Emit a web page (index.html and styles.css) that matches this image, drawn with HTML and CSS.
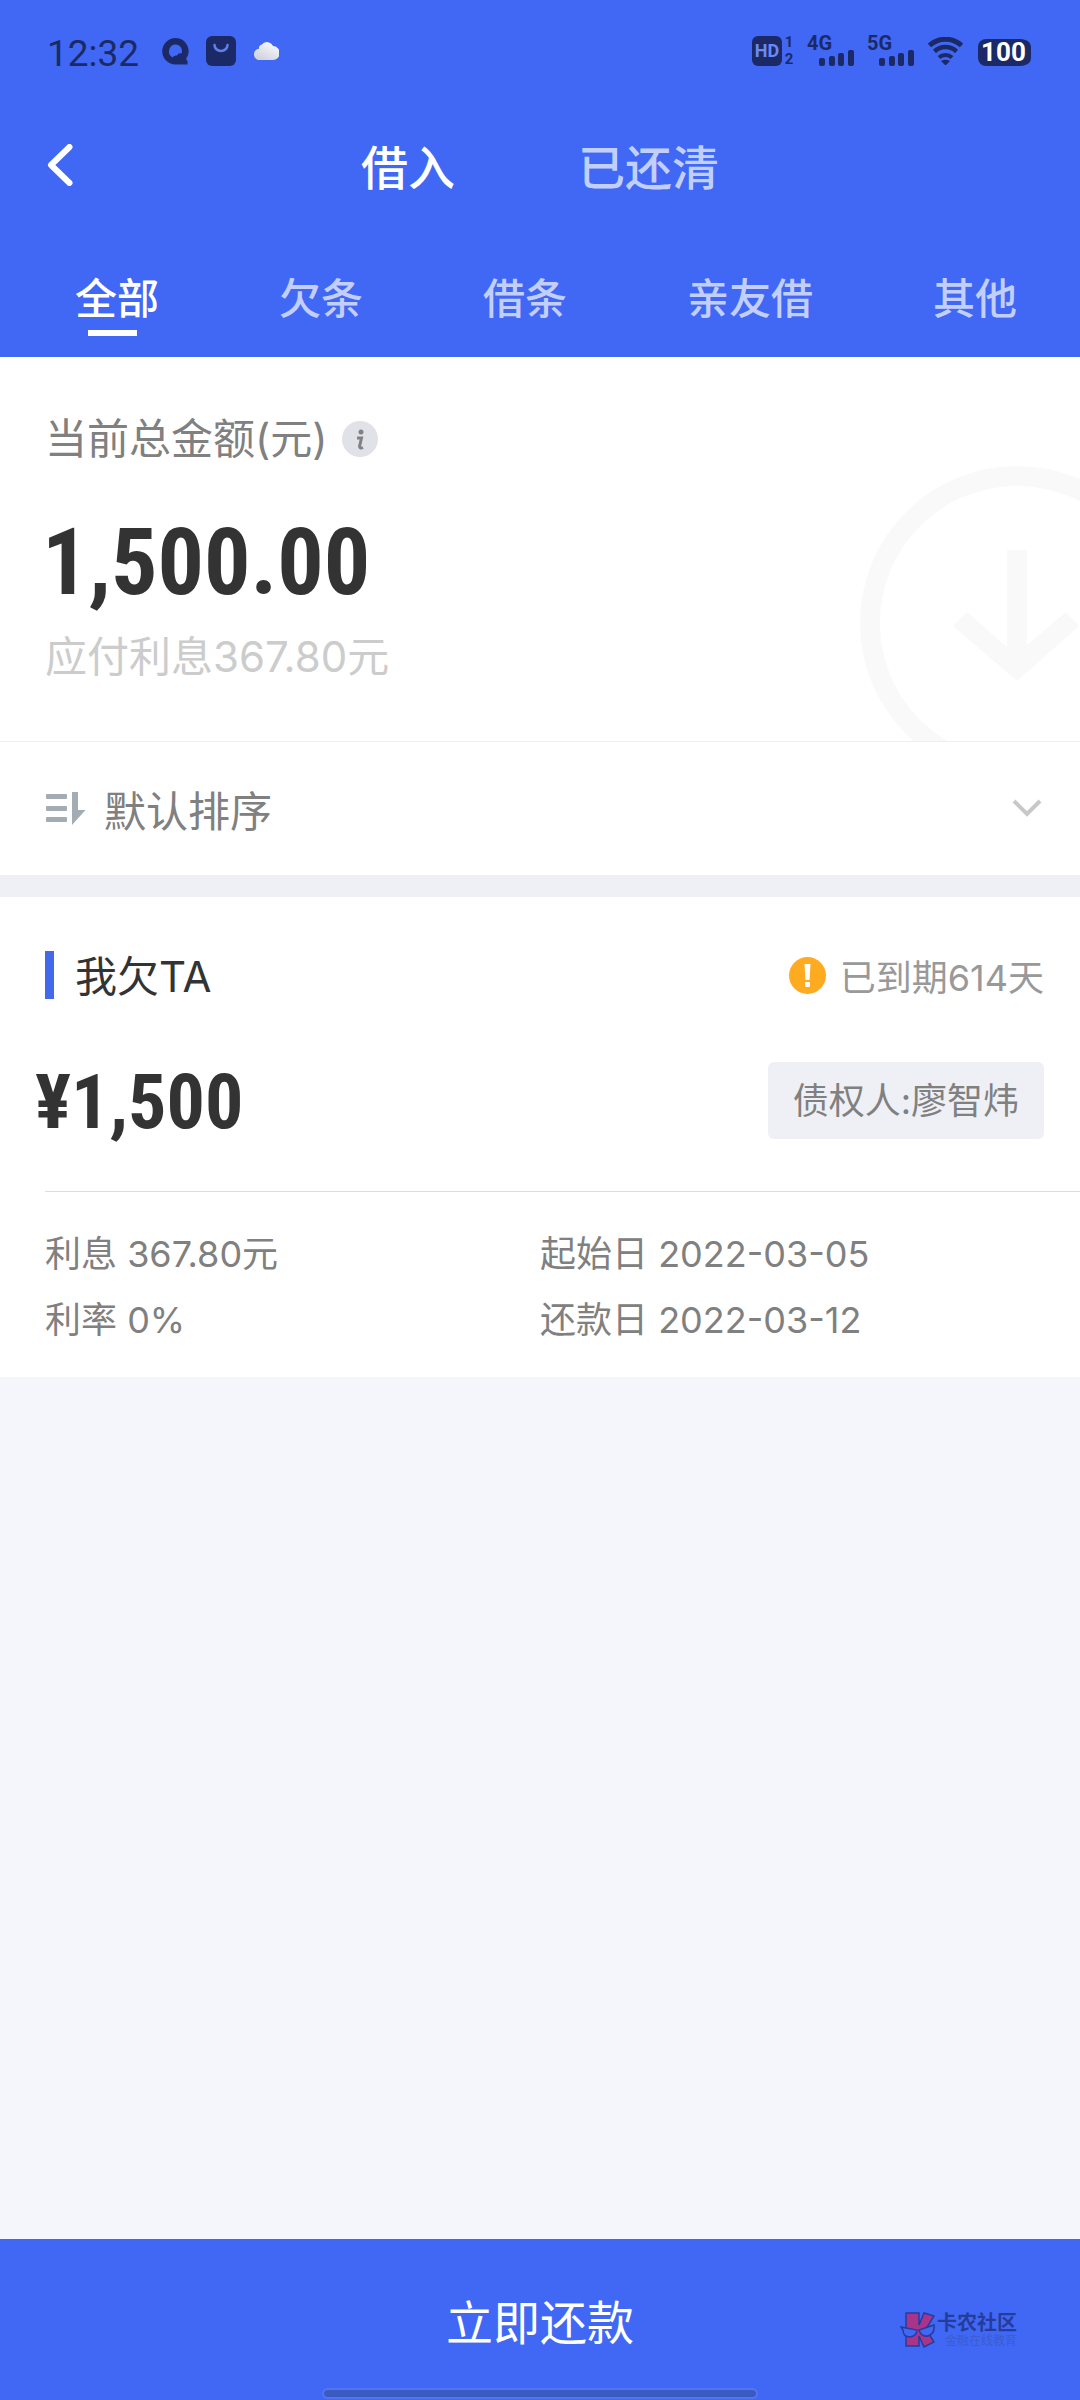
FILE: index.html
```html
<!DOCTYPE html>
<html lang="zh-CN">
<head>
<meta charset="utf-8">
<meta name="viewport" content="width=device-width, initial-scale=1">
<title>借入</title>
<link rel="stylesheet" href="styles.css">
</head>
<body>
<div class="page">
  <header class="header">
    <div class="status">
      <div class="status-left">
        <span class="clock">12:32</span>
        <svg class="ic-q" viewBox="0 0 27 27" width="27" height="27"><path fill="#1b2a66" fill-rule="evenodd" d="M13.500 0A13.200 13.200 0 0 0 13.500 26.500H25.500V23L24 21A13.200 13.200 0 0 0 13.500 0ZM13 6.500A6.500 6.500 0 0 1 19.500 15.500Q16.500 14.500 15 17.500Q12 17 10.500 19.500A7 7 0 0 1 13 6.500Z"/></svg>
        <svg class="ic-bag" viewBox="0 0 30 30" width="30" height="30"><rect width="30" height="30" rx="6" fill="#1b2a66"/><path d="M8.500 9a6.500 6 0 0 0 13 0" fill="none" stroke="#5f80f0" stroke-width="2.500" stroke-linecap="round"/></svg>
        <svg class="ic-cloud" viewBox="0 0 25 19" width="25" height="19"><defs><linearGradient id="cl" x1="1" y1="0" x2="0.300" y2="1"><stop offset="0" stop-color="#fff"/><stop offset="1" stop-color="#cfd3df"/></linearGradient></defs><path fill="url(#cl)" d="M6 19a5.500 5.500 0 0 1-1-11.200A4 4 0 0 1 8 3.500 6.500 6.500 0 0 1 19 5A6.300 6.300 0 0 1 18.500 19Z"/></svg>
      </div>
      <div class="status-right">
        <div class="hd">
          <span class="hd-box">HD</span>
          <span class="sims"><span>1</span><span>2</span></span>
        </div>
        <div class="signal">
          <span class="net">4G</span>
          <svg viewBox="0 0 35 16" width="35" height="16" fill="#1b2a66"><rect y="8" width="6" height="8" rx="2"/><rect x="10" y="6" width="6" height="10" rx="2"/><rect x="19" y="3" width="6" height="13" rx="2"/><rect x="29" width="6" height="16" rx="2"/></svg>
        </div>
        <div class="signal">
          <span class="net">5G</span>
          <svg viewBox="0 0 35 16" width="35" height="16" fill="#1b2a66"><rect y="8" width="6" height="8" rx="2"/><rect x="10" y="6" width="6" height="10" rx="2"/><rect x="19" y="3" width="6" height="13" rx="2"/><rect x="29" width="6" height="16" rx="2"/></svg>
        </div>
        <svg class="wifi" viewBox="0 0 35 28" width="35" height="28" fill="none" stroke="#1b2a66" stroke-width="5"><path d="M1.500 8.500a23.500 23.500 0 0 1 32 0"/><path d="M6.500 14.500a16 16 0 0 1 22 0" stroke-width="4.500"/><path d="M11 20.500a9.500 9.500 0 0 1 13 0" stroke-width="4"/><path d="M13 24L17.500 28.500L22 24Q17.500 21.500 13 24Z" fill="#1b2a66" stroke="none"/></svg>
        <span class="battery">100</span>
      </div>
    </div>
    <div class="nav">
      <button class="back" aria-label="返回"><svg viewBox="0 0 26 42" width="26" height="42"><path d="M22.500 3L4 21L22.500 39" fill="none" stroke="#fff" stroke-width="6" stroke-linecap="round" stroke-linejoin="round"/></svg></button>
      <div class="switch">
        <button class="switch-item active">借入</button>
        <button class="switch-item">已还清</button>
      </div>
    </div>
    <nav class="tabs">
      <button class="tab active">全部</button>
      <button class="tab">欠条</button>
      <button class="tab">借条</button>
      <button class="tab">亲友借</button>
      <button class="tab">其他</button>
    </nav>
  </header>

  <section class="summary">
    <svg class="deco" viewBox="0 0 220 275" width="220" height="275"><circle cx="157" cy="157" r="147" fill="none" stroke="#f9f9f9" stroke-width="20"/><path fill="#f9f9f9" d="M147 84H167V179L206 146L219 160L157 215L93 160L107 146L147 181Z"/></svg>
    <div class="summary-label">
      <span>当前总金额(元)</span>
      <button class="info" aria-label="说明"><svg viewBox="0 0 36 36" width="36" height="36"><circle cx="18" cy="18" r="18" fill="#e1e2e8"/><circle cx="19" cy="11" r="2.500" fill="#808086"/><path d="M15 17H19.500L17.500 25.500Q18 28 21 26.500" fill="none" stroke="#808086" stroke-width="3"/></svg></button>
    </div>
    <div class="total">1,500.00</div>
    <div class="interest">应付利息367.80元</div>
  </section>

  <button class="sort">
    <svg viewBox="0 0 40 34" width="40" height="34" fill="#a3acb3"><rect y="2" width="21" height="5" rx="1"/><rect y="14" width="21" height="5" rx="1"/><rect y="25" width="21" height="5" rx="1"/><path d="M26 0H32V18H39.500L26 33Z"/></svg>
    <span class="sort-text">默认排序</span>
    <svg viewBox="0 0 30 19" width="30" height="19"><path d="M2 2L15 15L28 2" fill="none" stroke="#c8c8c8" stroke-width="4"/></svg>
  </button>

  <main class="list">
    <article class="card">
      <div class="card-head">
        <h2 class="card-title">我欠TA</h2>
        <span class="due">
          <svg viewBox="0 0 37 37" width="37" height="37"><circle cx="18.500" cy="18.500" r="18.500" fill="#ffab1f"/><path d="M15.500 7H21.500L20.500 23H16.500Z" fill="#fff"/><rect x="16" y="25" width="5" height="5" rx="1" fill="#fff"/></svg>
          已到期614天
        </span>
      </div>
      <div class="card-main">
        <span class="amount">¥1,500</span>
        <span class="creditor">债权人:廖智炜</span>
      </div>
      <div class="details">
        <span>利息 367.80元</span><span>起始日 2022-03-05</span>
        <span>利率 0%</span><span>还款日 2022-03-12</span>
      </div>
    </article>
  </main>

  <footer class="footer">
    <button class="repay">立即还款</button>
    <div class="home-bar"></div>
    <div class="mark">
      <svg viewBox="0 0 35 36" width="35" height="36" stroke="#263c9c" stroke-width="1.500"><path fill="#a8358a" d="M6 1H19V13L24 1L34 4L26 17L34 30L24 35L19 24V34H6Z"/><path fill="#4068f4" d="M1 15L17 18Q17 24 10 25Q3 25 3 18Z"/><path fill="#4068f4" d="M19 18L34 13Q35 22 28 24Q21 25 19 18Z"/></svg>
      <div class="mark-text"><span class="mark-name">卡农社区</span><span class="mark-sub">金融在线教育</span></div>
    </div>
  </footer>
</div>
</body>
</html>
```
FILE: styles.css
```css
* { box-sizing: border-box; }

body {
  margin: 0;
  font-family: Inter, "Noto Sans CJK SC", sans-serif;
  color: #333;
  background: #f4f6fb;
}

button {
  padding: 0;
  border: 0;
  background: none;
  font: inherit;
  color: inherit;
  cursor: pointer;
}

svg { display: block; flex: none; }

.page {
  display: flex;
  flex-direction: column;
  min-height: 100vh;
}

/* header */
.header { background: #4068f4; color: #fff; }

.status {
  display: flex;
  justify-content: space-between;
  height: 100px;
  padding: 36px 48px 0 47px;
  color: #1b2a66;
}

.status-left, .status-right { display: flex; height: 30px; align-items: center; }

.clock { font: 37px/30px Roboto, sans-serif; margin: 6px 23px 0 0; }
.ic-bag { margin: 0 18px 0 17px; }
.ic-cloud { margin-bottom: 2px; }
.status-right { gap: 13px; }
.hd { display: flex; gap: 2px; }

.hd-box {
  width: 30px;
  border-radius: 6px;
  background: #1b2a66;
  color: #6b8af5;
  font: bold 18px/30px Roboto, sans-serif;
  text-align: center;
}

.sims {
  display: flex;
  flex-direction: column;
  justify-content: space-between;
  width: 10px;
  font: bold 15px/13px Roboto, sans-serif;
  text-align: center;
}

.signal { display: flex; flex-direction: column; align-items: flex-end; height: 30px; width: 47px; }
.net { align-self: flex-start; font: bold 20px/14px Roboto, sans-serif; }
.wifi { margin: 0 2px 0 1px; }

.battery {
  width: 51px;
  margin: 3px 3px 0 0;
  border-radius: 8px;
  background: #1b2a66;
  box-shadow: 3px 0 0 -1px #1b2a66;
  color: #fff;
  font: bold 26px/27px Roboto, sans-serif;
  text-align: center;
}

.nav {
  display: grid;
  grid-template-columns: 1fr auto 1fr;
  align-items: center;
  height: 135px;
  padding: 0 47px;
}

.back { justify-self: start; margin-bottom: 6px; }
.switch { display: flex; gap: 123px; }
.switch-item { font-size: 47px; line-height: 64px; font-weight: 500; color: #c2cffc; }
.tabs { display: flex; justify-content: space-between; height: 122px; padding: 34px 63px 0 75px; }
.tab { position: relative; align-self: flex-start; font-size: 42px; line-height: 60px; font-weight: 500; color: #c2cffc; }
.switch-item.active, .tab.active { color: #fff; }

.tab.active::after {
  content: "";
  position: absolute;
  left: 13px;
  bottom: -7px;
  width: 49px;
  height: 6px;
  background: #fff;
}

/* summary */
.summary {
  position: relative;
  overflow: hidden;
  height: 385px;
  padding: 52px 45px 0;
  border-bottom: 1px solid #eee;
  background: #fff;
}

.deco { position: absolute; right: 0; bottom: 0; }
.summary-label { display: flex; align-items: center; gap: 14px; font-size: 42px; line-height: 60px; color: #808080; }
.total { margin: 34px 0 2px -3px; font: bold 92px/120px "Roboto Condensed", Roboto, sans-serif; }
.interest { padding-top: 2px; font-size: 42px; line-height: 60px; color: #ccc; }

/* sort row */
.sort {
  display: flex;
  align-items: center;
  height: 133px;
  padding: 0 38px 0 46px;
  background: #fff;
  color: #808080;
  font-size: 42px;
  text-align: left;
}

.sort-text { flex: 1; margin-left: 18px; }

/* card */
.list { border-top: 22px solid #eff0f5; }
.card { padding: 48px 0 24px 45px; background: #fff; }
.card-head { display: flex; justify-content: space-between; align-items: center; height: 60px; padding-right: 36px; }

.card-title {
  margin: 0;
  padding: 4px 0 0 21px;
  border-left: 9px solid #4169e9;
  font-size: 42px;
  line-height: 44px;
  font-weight: 400;
}

.due { display: flex; align-items: center; gap: 14px; font-size: 36px; color: #999; }

.card-main {
  display: flex;
  justify-content: space-between;
  align-items: center;
  height: 187px;
  padding: 4px 36px 0 0;
  border-bottom: 1px solid #ddd;
}

.amount { margin-left: -10px; padding-top: 4px; font: bold 76px/100px "Roboto Condensed", Roboto, sans-serif; }
.creditor { padding: 2px 25px 0; border-radius: 6px; background: #eff0f5; color: #808080; font-size: 36px; line-height: 75px; }

.details {
  display: grid;
  grid-template-columns: 495px 1fr;
  padding-top: 29px;
  font-size: 36px;
  line-height: 66px;
  color: #808080;
}

/* footer */
.footer {
  position: relative;
  display: flex;
  flex-direction: column;
  align-items: center;
  margin-top: auto;
  padding-bottom: 3px;
  background: #4068f4;
}

.repay { width: 100%; height: 151px; padding-top: 9px; color: #fff; font-size: 47px; }
.home-bar { width: 40%; height: 7px; border-radius: 4px; background: #3a5cc0; box-shadow: 0 0 0 2px #5175f5; }

.mark { position: absolute; right: 63px; top: 73px; display: flex; gap: 2px; pointer-events: none; }
.mark-text { display: flex; flex-direction: column; align-items: flex-end; }
.mark-name { font-size: 20px; line-height: 22px; font-weight: 700; color: #263c9c; }
.mark-sub { font-size: 12px; line-height: 14px; color: #3c5cd0; }
```
